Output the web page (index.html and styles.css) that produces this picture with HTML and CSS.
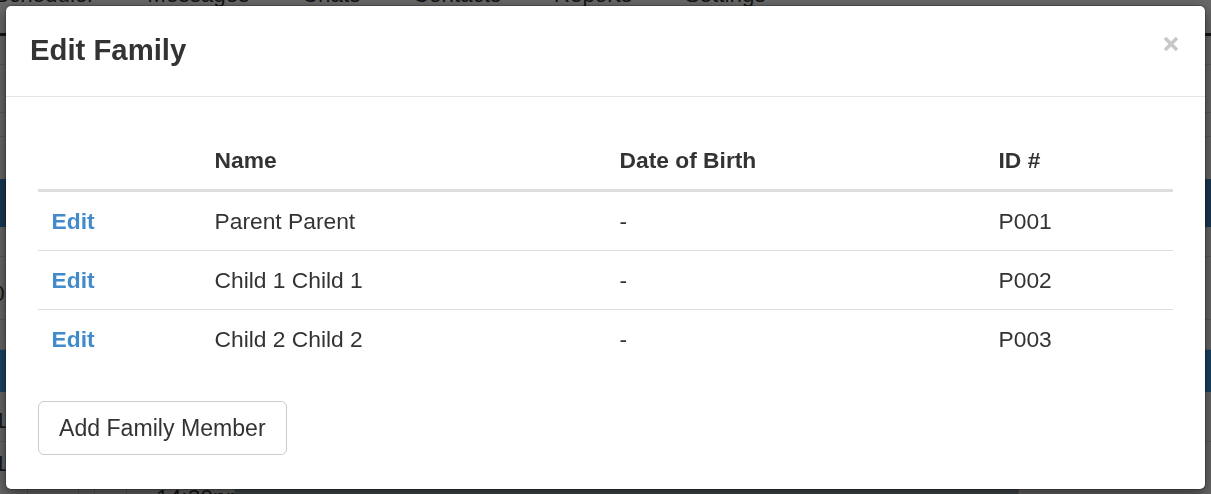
FILE: index.html
```html
<!DOCTYPE html>
<html lang="en">
<head>
<meta charset="utf-8">
<title>Edit Family</title>
<link rel="stylesheet" href="styles.css">
</head>
<body>
<div class="page">
  <nav class="tabs">
    <span>Scheduler</span>
    <span>Messages</span>
    <span>Chats</span>
    <span>Contacts</span>
    <span>Reports</span>
    <span>Settings</span>
  </nav>
  <div class="sheet">
    <div class="gap gap-top"></div>
    <div class="bar"></div>
    <div class="row row-a"></div>
    <div class="row row-b"></div>
    <div class="row row-c"></div>
    <div class="gap gap-mid"></div>
    <div class="band band-a"></div>
    <div class="row row-d"></div>
    <div class="row row-num"><span class="digit digit-0">0</span></div>
    <div class="row row-e"><span class="digit digit-l">l</span></div>
    <div class="band band-b"></div>
    <div class="row row-num2"><span class="digit digit-1">1</span></div>
    <div class="row row-num3"><span class="digit digit-1">1</span></div>
    <div class="foot">
      <div class="cell c1"></div>
      <div class="cell c2"></div>
      <div class="cell c3"></div>
      <div class="cell c4"></div>
      <div class="cell c5">14:30pm</div>
      <div class="cell c6"></div>
      <div class="cell c7"></div>
    </div>
  </div>
</div>

<div class="modal">
  <div class="modal-content">
    <div class="modal-header">
      <h4 class="modal-title">Edit Family</h4>
      <button class="close" type="button" aria-label="Close">
        <svg width="16" height="16" viewBox="0 0 16 16" aria-hidden="true">
          <path d="M2 2 L14 14 M14 2 L2 14" stroke="#c8c8c8" stroke-width="3.5" stroke-linecap="butt" fill="none"/>
        </svg>
      </button>
    </div>
    <div class="modal-body">
      <table class="table">
        <colgroup>
          <col class="col-edit">
          <col class="col-name">
          <col class="col-dob">
          <col class="col-id">
        </colgroup>
        <thead>
          <tr><th></th><th>Name</th><th>Date of Birth</th><th>ID #</th></tr>
        </thead>
        <tbody>
          <tr><td><a href="#">Edit</a></td><td>Parent Parent</td><td>-</td><td>P001</td></tr>
          <tr><td><a href="#">Edit</a></td><td>Child 1 Child 1</td><td>-</td><td>P002</td></tr>
          <tr><td><a href="#">Edit</a></td><td>Child 2 Child 2</td><td>-</td><td>P003</td></tr>
        </tbody>
      </table>
      <button class="btn" type="button">Add Family Member</button>
    </div>
  </div>
</div>
</body>
</html>
```
FILE: styles.css
```css
* { box-sizing: border-box; }

html, body {
  margin: 0;
  height: 494px;
  overflow: hidden;
}

body {
  background: #6a6a6a;
  font-family: "Liberation Sans", Arial, sans-serif;
  font-size: 22.8px;
  line-height: 32px;
  color: #333;
}

/* ---------- dimmed page behind the modal ---------- */
.tabs {
  display: flex;
  gap: 52.5px;
  margin: -21px 0 0 -6px;
  height: 32px;
  font-size: 22.4px;
  color: #151515;
  white-space: nowrap;
}

.sheet { display: flex; flex-direction: column; }
.gap-top { height: 22px; }
.bar { height: 3px; background: #151515; }
.row { border-bottom: 1px solid #5c5c5c; }
.row-a { height: 29px; }
.row-b { height: 48px; }
.row-c { height: 24px; }
.gap-mid { height: 42px; }
.band { background: #1c3a55; }
.band-a { height: 48px; }
.band-b { height: 42px; background: #1b4566; }
.row-d { height: 30px; }
.row-num { height: 63px; padding-top: 20px; }
.row-e { height: 30px; padding-top: 6px; }
.row-num2 { height: 50px; padding-top: 12px; }
.row-num3 { height: 39px; padding-top: 5px; border-bottom: 0; }

.digit { display: block; color: #1a1a1a; }
.digit-0 { margin-left: -8px; }
.digit-l { margin-left: -4px; color: #4a4a4a; }
.digit-1 { margin-left: -6px; }

.foot { display: flex; height: 20px; }
.cell { border-left: 1px solid #5a5a5a; color: #151515; white-space: nowrap; }
.c1 { width: 27px; border-left: 0; }
.c2 { width: 51px; }
.c3 { width: 16px; }
.c4 { width: 32px; }
.c5 { width: 108px; padding-left: 29px; }
.c6 { width: 784px; background: #434c4f; }
.c7 { flex: 1; }

/* ---------- modal ---------- */
.modal {
  position: fixed;
  inset: 0;
  padding: 5px;
}

.modal-content {
  background: #fff;
  border: 1px solid rgba(0, 0, 0, 0.2);
  border-radius: 6px;
  box-shadow: 0 5px 15px rgba(0, 0, 0, 0.5);
  background-clip: padding-box;
}

.modal-header {
  display: flex;
  justify-content: space-between;
  align-items: flex-start;
  padding: 23px 26px 25px 24px;
  border-bottom: 1px solid #e5e5e5;
}

.modal-title {
  margin: 0;
  font-size: 29.3px;
  line-height: 42px;
  font-weight: bold;
  color: #333;
}

.close {
  margin: 7px 0 0 0;
  padding: 0;
  border: 0;
  background: none;
  width: 16px;
  height: 16px;
  display: block;
}
.close svg { display: block; }

.modal-body {
  padding: 34px 32px 34px 32px;
}

.table {
  width: 100%;
  table-layout: fixed;
  border-collapse: separate;
  border-spacing: 0;
  margin-bottom: 33px;
}

.col-edit { width: 163px; }
.col-name { width: 405px; }
.col-dob { width: 379px; }
.col-id { width: 188px; }

.table th,
.table td {
  padding: 13px 12px 13px 13.5px;
  line-height: 32px;
  text-align: left;
  vertical-align: top;
}

.table th {
  font-weight: bold;
  color: #333;
  border-bottom: 3px solid #dddddd;
}

.table td { border-top: 1px solid #dddddd; }
.table tbody tr:first-child td { border-top: 0; }

.table a {
  color: #428bca;
  font-weight: bold;
  text-decoration: none;
}

.btn {
  display: inline-block;
  font-family: inherit;
  font-size: 23.1px;
  line-height: 32px;
  color: #333;
  background: #fff;
  border: 1px solid #cccccc;
  border-radius: 6px;
  padding: 10px 20px;
}
```
